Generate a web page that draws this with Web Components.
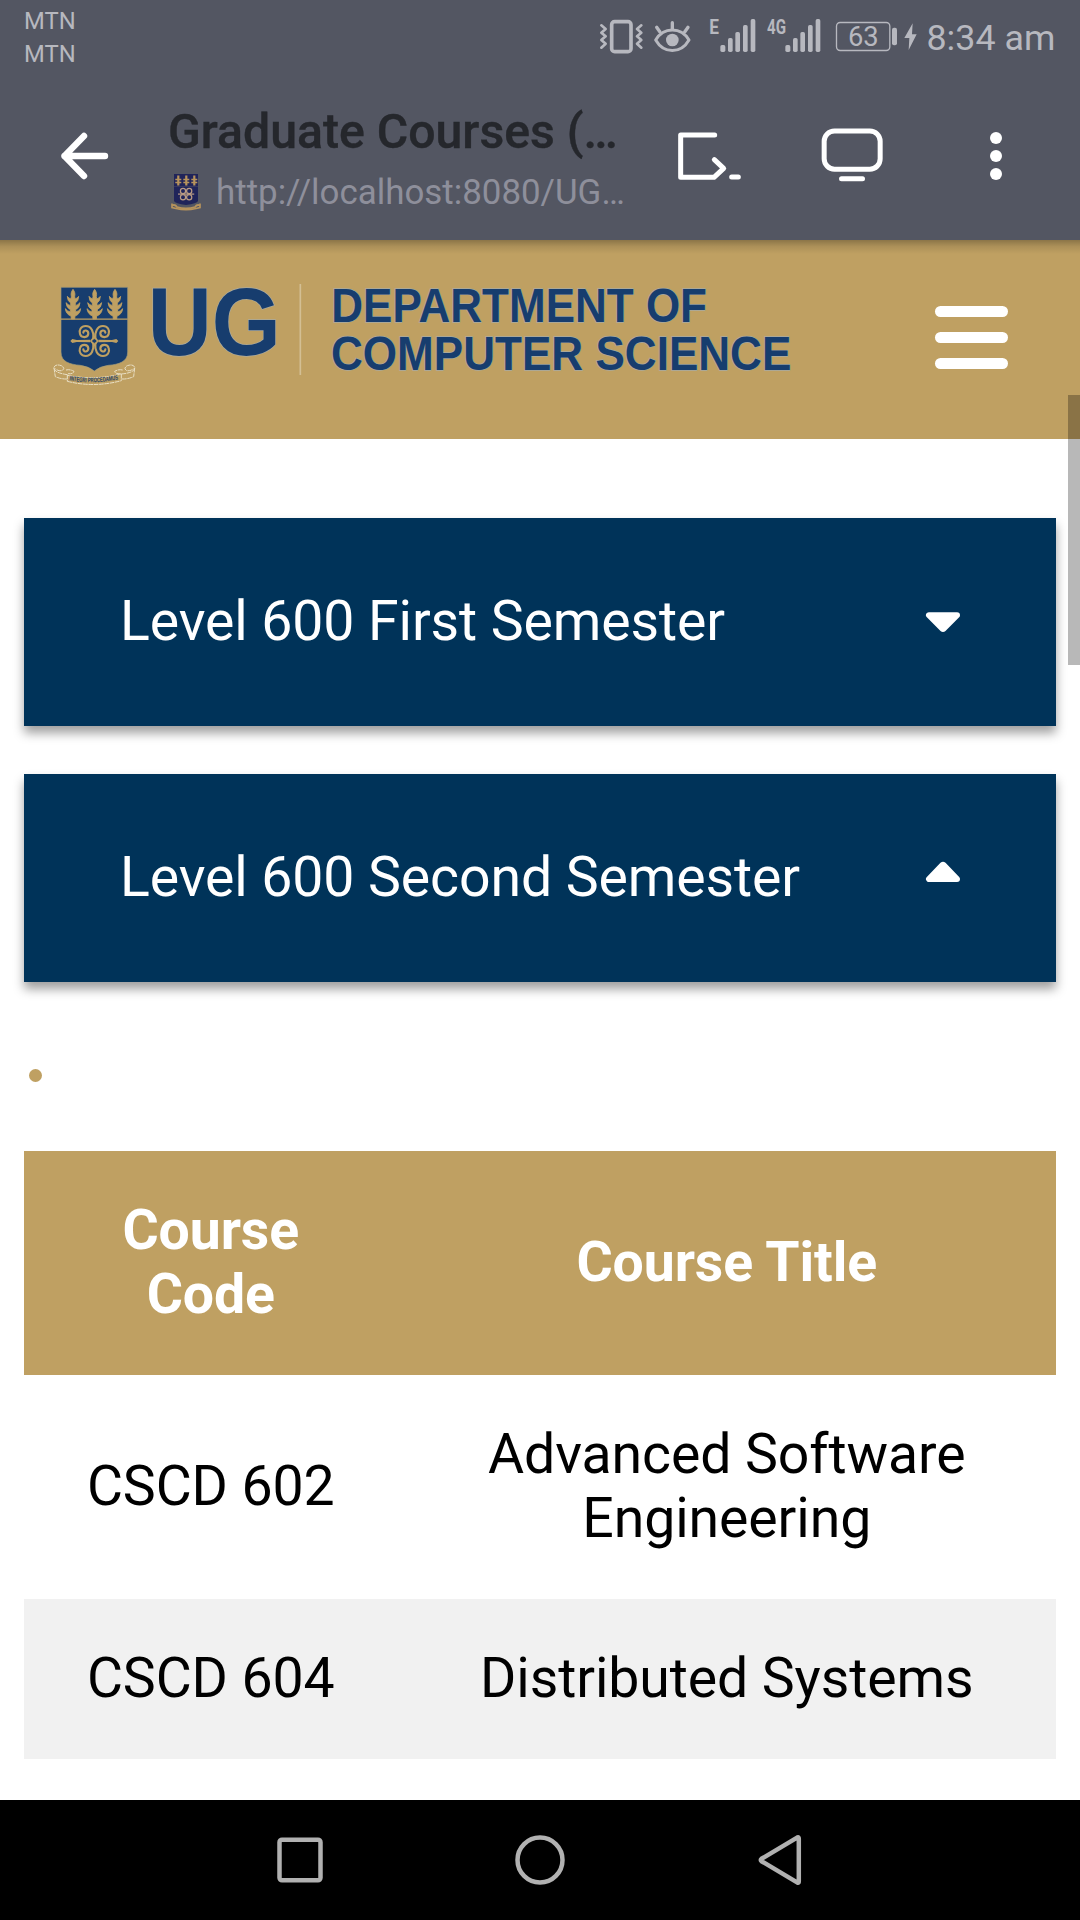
<!DOCTYPE html>
<html lang="en">
<head>
<meta charset="utf-8">
<title>Graduate Courses</title>
<style>
html,body{margin:0;padding:0;background:#fff}
body{width:1080px;height:1920px;overflow:hidden;font-family:Roboto,"Liberation Sans",sans-serif}
</style>
</head>
<body>
<phone-screen>
  <status-bar slot="top">
    <span slot="carrier">MTN</span>
    <span slot="carrier">MTN</span>
    <span slot="time">8:34 am</span>
  </status-bar>
  <browser-bar slot="top">
    <span slot="title">Graduate Courses (…</span>
    <span slot="url">http://localhost:8080/UG…</span>
  </browser-bar>
  <site-header></site-header>
  <semester-toggle>Level 600 First Semester</semester-toggle>
  <semester-toggle open>Level 600 Second Semester</semester-toggle>
  <list-marker></list-marker>
  <course-table>
    <course-row kind="head"><span slot="code">Course<br>Code</span><span slot="name">Course Title</span></course-row>
    <course-row><span slot="code">CSCD 602</span><span slot="name">Advanced Software<br>Engineering</span></course-row>
    <course-row kind="alt"><span slot="code">CSCD 604</span><span slot="name">Distributed Systems</span></course-row>
  </course-table>
  <scroll-thumb></scroll-thumb>
  <nav-bar slot="bottom"></nav-bar>
</phone-screen>

<script>
const define = (name, html) => customElements.define(name, class extends HTMLElement {
  constructor() {
    super();
    this.attachShadow({ mode: 'open' }).innerHTML = html;
  }
});

define('phone-screen', `
<style>
:host{display:flex;flex-direction:column;width:1080px;height:1920px;overflow:hidden;background:#fff}
.top{flex:none;background:#535662}
main{flex:1;min-height:0;position:relative;overflow:hidden;background:#fff}
main::before{content:"";position:absolute;z-index:2;left:0;right:0;top:0;height:14px;background:linear-gradient(rgba(0,0,0,.27),rgba(0,0,0,.1) 45%,transparent)}
</style>
<div class="top"><slot name="top"></slot></div>
<main><slot></slot></main>
<slot name="bottom"></slot>`);

define('status-bar', `
<style>
:host{display:flex;height:72px;color:#b7b8bf;align-items:flex-start}
.carriers{display:flex;flex-direction:column;padding:5px 0 0 24px;font-size:23.8px;line-height:33px;flex:1}
svg{display:block;height:60px;flex:none}
.time{font-size:35.800px;line-height:42px;padding-top:17px;width:153.500px;white-space:nowrap}
text{font-family:Roboto,sans-serif;fill:#b7b8bf}
</style>
<div class="carriers"><slot name="carrier"></slot></div>
<svg style="width:54px" viewBox="50 0 162 180" fill="none" stroke="#b7b8bf">
  <rect x="94" y="65" width="58" height="90" rx="9" stroke-width="11"/>
  <path d="M63 76l13 11-13 11 13 11-13 11 13 11-13 12M183 76l-13 11 13 11-13 11 13 11-13 11 13 12" stroke-width="8" stroke-linecap="round" stroke-linejoin="round"/>
</svg>
<svg style="width:56px" viewBox="212 0 168 180" fill="none" stroke="#b7b8bf">
  <path d="M226 120C250 80 302 80 326 120C302 162 250 162 226 120Z" stroke-width="9" stroke-linejoin="round"/>
  <circle cx="276" cy="120" r="19" fill="#b7b8bf" stroke="none"/>
  <path d="M276 68V87M229 82l10 14M323 82l-10 14" stroke-width="10" stroke-linecap="round"/>
</svg>
<svg style="width:58px" viewBox="380 0 174 180">
  <text x="387" y="102" font-size="60" font-weight="700" textLength="29" lengthAdjust="spacingAndGlyphs">E</text>
  <g fill="#b7b8bf"><rect x="420" y="135" width="15" height="21" rx="5"/><rect x="443" y="114" width="14" height="42" rx="5"/><rect x="465" y="96" width="14" height="60" rx="5"/><rect x="488" y="75" width="14" height="81" rx="5"/><rect x="511" y="57" width="14" height="99" rx="5"/></g>
</svg>
<svg style="width:67px" viewBox="554 0 201 180">
  <text x="560" y="102" font-size="60" font-weight="700" textLength="57" lengthAdjust="spacingAndGlyphs">4G</text>
  <g fill="#b7b8bf"><rect x="615" y="135" width="15" height="21" rx="5"/><rect x="638" y="114" width="14" height="42" rx="5"/><rect x="660" y="96" width="14" height="60" rx="5"/><rect x="683" y="75" width="14" height="81" rx="5"/><rect x="706" y="57" width="14" height="99" rx="5"/></g>
</svg>
<svg style="width:94.800px" viewBox="755 0 284.400 180">
  <rect x="768.500" y="67.500" width="160" height="84" rx="11" fill="none" stroke="#b7b8bf" stroke-width="4"/>
  <rect x="935" y="83" width="15" height="53" rx="6" fill="#b7b8bf"/>
  <path d="M997 70L972 114H987L985 150L1009 103H995Z" fill="#b7b8bf"/>
  <text x="803" y="139" font-size="82">63</text>
</svg>
<div class="time"><slot name="time"></slot></div>`);

define('browser-bar', `
<style>
:host{display:flex;height:168px;align-items:flex-start}
svg{display:block;flex:none}
.text{width:456px;padding-left:38px;box-sizing:border-box;padding-top:31px;white-space:nowrap}
.title{font-weight:500;font-size:48.200px;line-height:58px;color:#25272c;-webkit-text-stroke:.4px #25272c}
.url{display:flex;align-items:flex-start;font-size:34.900px;line-height:42px;color:#8e8f9b}
.url svg{margin:12px 13px 0 1px}
.url div{padding-top:11px}
.icons{flex:1;display:flex}
</style>
<svg width="130" height="168" viewBox="0 72 130 168" fill="none" stroke="#fff" stroke-width="6.400" stroke-linecap="round" stroke-linejoin="round"><path d="M105 156H64.500M84 136L64.500 156L84 176"/></svg>
<div class="text">
  <div class="title"><slot name="title"></slot></div>
  <div class="url">
    <svg width="34" height="38" viewBox="169 173 34 38">
      <path d="M174 174H198V201Q197 203.500 186 205Q175 203.500 174 201Z" fill="#20245a"/>
      <g stroke="#b7935c" fill="none" stroke-width="1.300">
        <path d="M178.300 175.500V185.500M186.300 175.500V185.500M194.300 175.500V185.500" stroke-width="2.200"/>
        <path d="M175.300 179.500h6M175.300 182.500h6M183.300 179.500h6M183.300 182.500h6M191.300 179.500h6M191.300 182.500h6"/>
        <path d="M174 186.500H198" stroke="#3c3c62" stroke-width=".8"/>
        <g stroke="#bb9c85" stroke-width="1.200"><circle cx="183" cy="191" r="2.600"/><circle cx="189.200" cy="191" r="2.600"/><circle cx="183" cy="197.200" r="2.600"/><circle cx="189.200" cy="197.200" r="2.600"/><path d="M178 194.100H194.200"/></g>
        <path d="M172 203.500V207.500L176 208.500Q186 211 196 208.500L200 207.500V203.500M172 205.500Q175 204 177 207Q186 209.500 195 207Q197 204 200 205.500" stroke-width="1.700"/>
      </g>
    </svg>
    <div><slot name="url"></slot></div>
  </div>
</div>
<div class="icons">
<svg width="150" height="168" viewBox="18 216 450 504" style="overflow:visible" fill="none" stroke="#fff" stroke-width="15" stroke-linecap="round" stroke-linejoin="round"><path d="M404 405H302V532H402L431 505L403 479M455 531H475"/></svg>
<svg width="172" height="168" viewBox="468 216 516 504" fill="none" stroke="#fff" stroke-width="15" stroke-linecap="round"><rect x="732.500" y="393" width="168" height="114.500" rx="31"/><path d="M784.500 536H847.500"/></svg>
<svg width="172" height="168" viewBox="984 216 516 504" fill="#fff"><circle cx="1248" cy="414" r="18"/><circle cx="1248" cy="468" r="18"/><circle cx="1248" cy="522" r="18"/></svg>
</div>`);

define('ug-logo', `
<style>
:host{display:block}
svg{display:block;overflow:visible}
text{font-family:"Liberation Sans",Arial,sans-serif;font-weight:700;fill:#173d6e;stroke:#a9aaa0;stroke-width:4px;paint-order:stroke}
text.m{font-size:20px;font-weight:700;stroke:none;fill:#2a4566}
</style>
<svg width="780" height="150" viewBox="0 0 2340 450">
  <defs>
    <path id="leaf" stroke="#bfa062" stroke-width="2.500" stroke-linejoin="round" d="M0 -46C5 -39 7 -33 5 -25L6 -17Q13 -19 17 -25Q17 -11 7 -5V3Q15 1 21 -6Q20 9 8 15V22Q17 20 23 12Q21 29 6 34L5 43H-5L-6 34Q-21 29 -23 12Q-17 20 -8 22V15Q-20 9 -21 -6Q-15 1 -7 3V-5Q-17 -11 -17 -25Q-13 -19 -6 -17L-5 -25C-7 -33 -5 -39 0 -46Z"/>
    <path id="curl" d="M-3 -8C-1 -26 -8 -45 -26 -45C-40 -45 -47 -33 -43 -21C-39 -8 -19 -9 -18 -22C-18 -33 -32 -35 -33 -25"/>
    <path id="motto" d="M118 361Q193 375 270 357"/>
  </defs>
  <path d="M93 82H293V276C293 306 267 313 235 316Q208 320 193 333Q178 320 151 316C119 313 93 306 93 276Z" fill="#173d6e" stroke="#a39c79" stroke-width="2"/>
  <path d="M93 177.500H293" stroke="#bfa062" stroke-width="4"/>
  <g fill="#bfa062"><use href="#leaf" x="129" y="134"/><use href="#leaf" x="194" y="134"/><use href="#leaf" x="255" y="134"/></g>
  <g transform="translate(193 243)" fill="none" stroke="#bfa062" stroke-width="6.500" stroke-linecap="round">
    <use href="#curl"/><use href="#curl" transform="scale(-1 1)"/><use href="#curl" transform="scale(1 -1)"/><use href="#curl" transform="scale(-1 -1)"/>
    <path d="M0 -13L10 0L0 13L-10 0Z" stroke-width="5"/>
    <path d="M-12 -4L-53 -3L-66 -6L-72 0L-66 6L-53 3L-12 4ZM12 -4L53 -3L66 -6L72 0L66 6L53 3L12 4Z" fill="#bfa062" stroke="none"/>
  </g>
  <g fill="none" stroke="#e9dfc4" stroke-width="3" stroke-dasharray="14 2">
    <path d="M112 344Q70 338 72 322Q76 311 94 317Q108 325 96 332Q84 334 76 326M72 324L76 350Q94 358 112 357M112 346Q193 362 274 342M112 364Q193 384 274 362M108 330Q120 327 132 334Q130 343 112 341"/>
    <path d="M274 342Q316 338 314 322Q310 311 292 317Q278 325 290 332Q302 334 310 326M314 324L311 350Q292 358 276 357M278 330Q266 327 254 334Q256 343 274 341M112 344V364M274 342V362"/>
  </g>
  <text class="m"><textPath href="#motto" textLength="148" lengthAdjust="spacingAndGlyphs">INTEGRI PROCEDAMUS</textPath></text>
  <text x="353" y="284" font-size="288" textLength="399" lengthAdjust="spacingAndGlyphs">UG</text>
  <path d="M811 72V345" stroke="#d3bf94" stroke-width="5"/>
  <text x="904" y="185" font-size="144" textLength="1127" lengthAdjust="spacingAndGlyphs">DEPARTMENT OF</text>
  <text x="903" y="329" font-size="144" textLength="1381" lengthAdjust="spacingAndGlyphs">COMPUTER SCIENCE</text>
</svg>`);

define('site-header', `
<style>
:host{display:flex;justify-content:space-between;align-items:flex-start;box-sizing:border-box;height:199px;background:#bfa062;padding:20px 72px 0 30px;margin-bottom:79px}
.menu{display:flex;flex-direction:column;gap:14.800px;padding-top:45.700px;width:73px}
i{height:11.200px;border-radius:6px;background:#fff}
</style>
<ug-logo></ug-logo>
<div class="menu"><i></i><i></i><i></i></div>`);

define('semester-toggle', `
<style>
:host{display:flex;justify-content:space-between;align-items:center;box-sizing:border-box;height:208px;margin:0 24px 48px;padding:0 95.500px 0 96px;background:#003359;color:#fff;font-size:55.400px;letter-spacing:-.1px;line-height:64px;white-space:nowrap;box-shadow:0 7px 10px rgba(0,0,0,.38)}
svg{display:block;width:36px;height:60px}
:host([open]) .down,:host(:not([open])) .up{display:none}
path{fill:#fff;stroke:#fff;stroke-width:6px;stroke-linejoin:round}
</style>
<slot></slot>
<svg class="down" viewBox="0 0 36 60"><path d="M4 23.200H32L18.600 36.700Q18 37.200 17.400 36.700Z"/></svg>
<svg class="up" viewBox="0 0 36 60"><path d="M4 31H32L18.600 17Q18 16.500 17.400 17Z"/></svg>`);

define('list-marker', `
<style>
:host{display:flex;align-items:center;height:90px;padding:1px 0 0 29px;box-sizing:border-box}
i{width:13.400px;height:13.400px;border-radius:50%;background:#bfa062}
</style><i></i>`);

define('course-table', `
<style>:host{display:flex;flex-direction:column;margin:31px 24px 0}</style>
<slot></slot>`);

define('course-row', `
<style>
:host{display:grid;grid-template-columns:373.500px 658.500px;align-items:center;text-align:center;padding:48px 0;font-size:55.400px;letter-spacing:-.1px;line-height:64px;color:#000}
:host([kind=head]){background:#bfa062;color:#fff;font-weight:700}
:host([kind=alt]){background:#f1f1f1}
</style>
<slot name="code"></slot><slot name="name"></slot>`);

define('scroll-thumb', `
<style>:host{display:block;position:absolute;z-index:3;right:0;top:155px;width:12px;height:270px;background:rgba(0,0,0,.28)}</style>`);

define('nav-bar', `
<style>
:host{display:flex;justify-content:center;align-items:center;flex:none;height:120px;background:#000}
svg{display:block;width:240px;height:120px;fill:none;stroke:#b1b1b1;stroke-width:4.500px;stroke-linejoin:round}
</style>
<svg viewBox="180 0 240 120"><rect x="279.500" y="39.700" width="41" height="40.600" rx="2.500"/></svg>
<svg viewBox="420 0 240 120"><circle cx="540" cy="60" r="22.500"/></svg>
<svg viewBox="660 0 240 120"><path d="M797.500 37.400Q798.800 36.800 798.800 38.500V81.500Q798.800 83.200 797.500 82.600L761.500 61.200Q760 60 761.500 58.800Z"/></svg>`);
</script>
</body>
</html>
